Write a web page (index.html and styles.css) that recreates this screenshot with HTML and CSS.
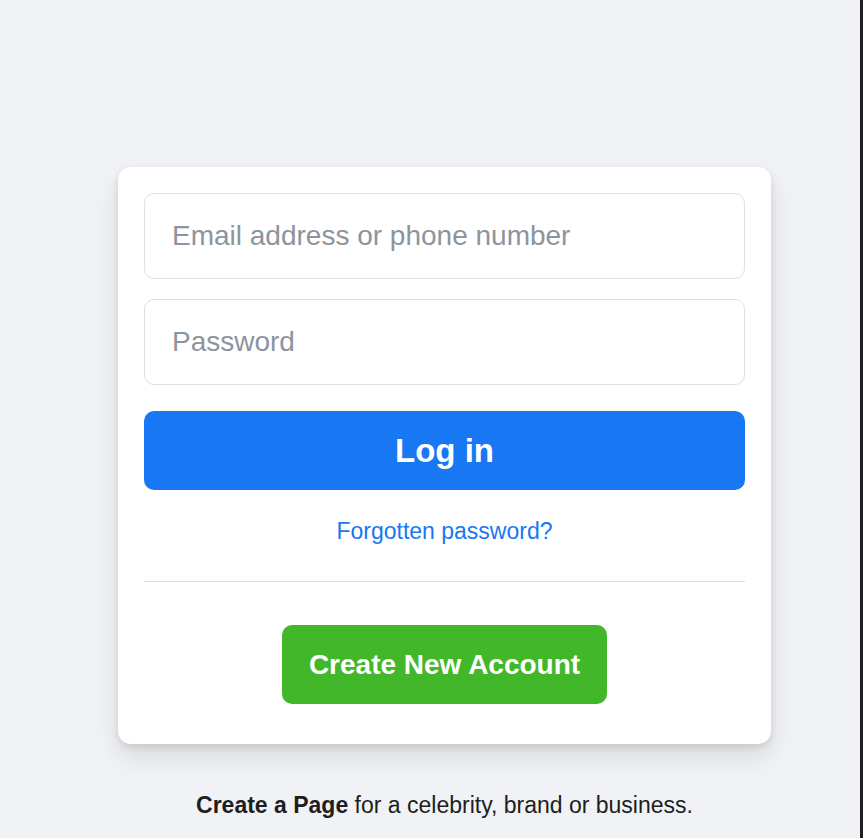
FILE: index.html
```html
<!DOCTYPE html>
<html lang="en">
<head>
<meta charset="utf-8">
<title>Log in</title>
<link rel="stylesheet" href="styles.css">
</head>
<body>
<div class="page">
  <main class="main">
    <div class="column">
      <form class="card">
        <input class="field" type="text" placeholder="Email address or phone number">
        <input class="field field-pass" type="password" placeholder="Password">
        <button class="btn-login" type="button">Log in</button>
        <div class="forgot"><a href="#">Forgotten password?</a></div>
        <div class="divider"></div>
        <div class="create-row"><button class="btn-create" type="button">Create New Account</button></div>
      </form>
      <p class="footer-note"><strong>Create a Page</strong> for a celebrity, brand or business.</p>
    </div>
  </main>
  <div class="edge"></div>
</div>
</body>
</html>
```

FILE: styles.css
```css
html, body {
  margin: 0;
  padding: 0;
  height: 100%;
  overflow: hidden;
}

body {
  font-family: "Liberation Sans", Arial, sans-serif;
  background: #f0f2f5;
  color: #1c1e21;
}

.page {
  display: flex;
  height: 100%;
}

.main {
  flex: 1;
  padding: 167px 0 0 118px;
}

.edge {
  width: 3px;
  background: #1f1f1f;
}

.column {
  width: 653px;
}

.card {
  box-sizing: border-box;
  width: 653px;
  background: #fff;
  border-radius: 13px;
  box-shadow: 0 3px 7px rgba(0, 0, 0, 0.1), 0 13px 26px rgba(0, 0, 0, 0.1);
  padding: 26px 26px 40px;
  display: flex;
  flex-direction: column;
}

.field {
  box-sizing: border-box;
  width: 100%;
  height: 86px;
  border: 1px solid #dddfe2;
  border-radius: 10px;
  padding: 0 27px;
  font-family: inherit;
  font-size: 28px;
  color: #1d2129;
  outline: none;
  background: #fff;
}

.field::placeholder {
  color: #8d949e;
}

.field-pass {
  margin-top: 20px;
}

.btn-login {
  margin-top: 26px;
  height: 79px;
  border: none;
  border-radius: 10px;
  background: #1877f2;
  color: #fff;
  font-family: inherit;
  font-size: 33px;
  font-weight: bold;
  cursor: pointer;
}

.forgot {
  margin-top: 26px;
  text-align: center;
  font-size: 23px;
  line-height: 31px;
}

.forgot a {
  color: #1877f2;
  text-decoration: none;
}

.divider {
  margin-top: 34px;
  height: 1px;
  background: #dadde1;
}

.create-row {
  margin-top: 43px;
  display: flex;
  justify-content: center;
}

.btn-create {
  height: 79px;
  padding: 0 27px;
  border: none;
  border-radius: 10px;
  background: #42b72a;
  color: #fff;
  font-family: inherit;
  font-size: 28px;
  font-weight: bold;
  cursor: pointer;
}

.footer-note {
  margin: 46px 0 0;
  text-align: center;
  font-size: 23px;
  line-height: 31px;
}
```
